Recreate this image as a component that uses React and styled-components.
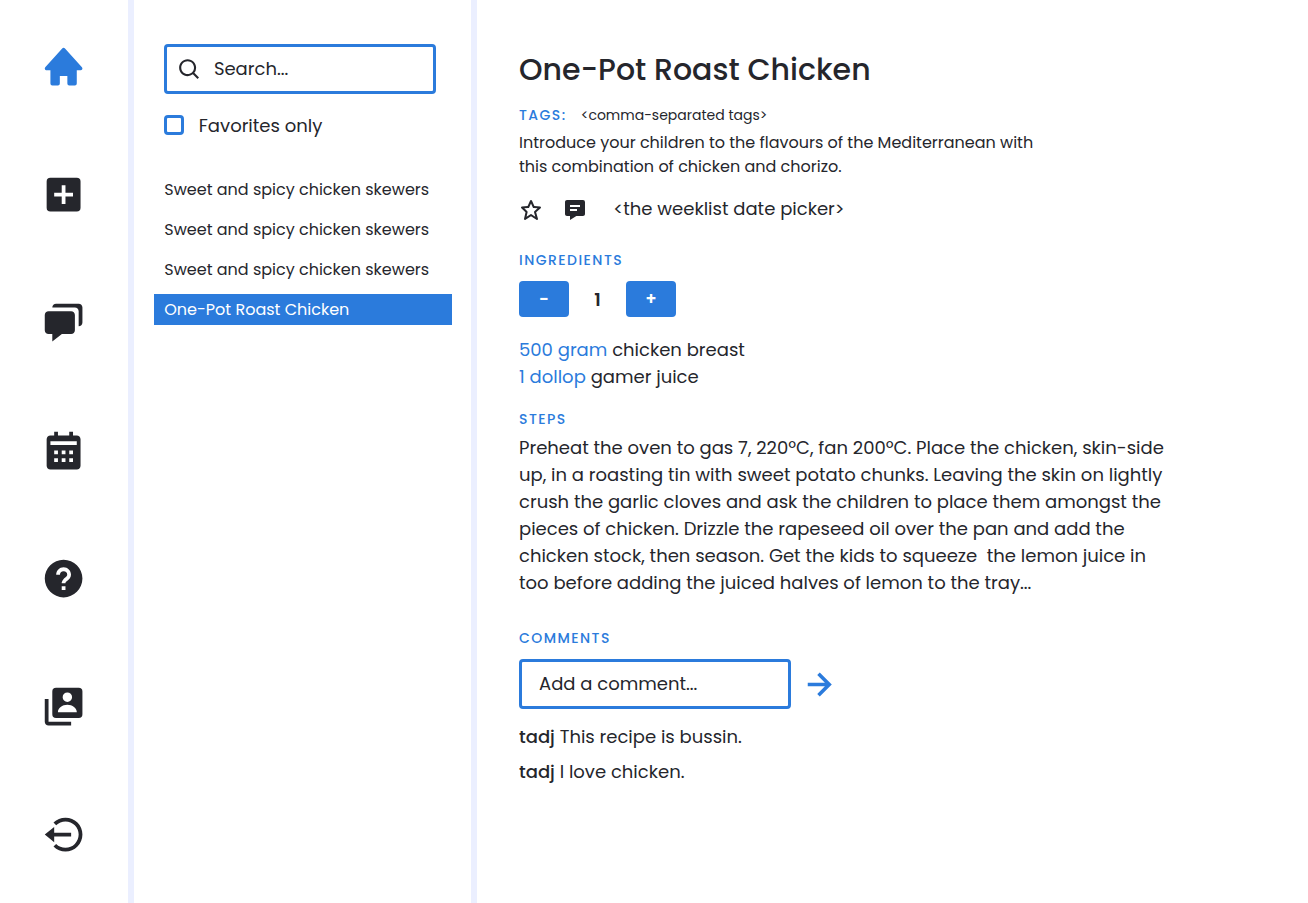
import React from "react";
import styled, { createGlobalStyle } from "styled-components";
import {
  BiSolidHome,
  BiSolidPlusSquare,
  BiSolidChat,
  BiSolidCalendar,
  BiSolidHelpCircle,
  BiSolidUserAccount,
  BiLogOutCircle,
  BiSearch,
  BiStar,
  BiSolidMessageDetail,
  BiRightArrowAlt,
} from "react-icons/bi";

const blue = "#2b7bdc";
const ink = "#25262c";
const line = "#ebefff";

const GlobalStyle = createGlobalStyle`
  *, *::before, *::after { box-sizing: border-box; }
  body {
    margin: 0;
    background: #fff;
    color: ${ink};
    font-family: Poppins, Inter, sans-serif;
    font-size: 18px;
    line-height: 27px;
  }
  svg { display: block; flex: none; }
`;

const Page = styled.div`
  display: flex;
  height: 903px;
  overflow: hidden;
`;

const Nav = styled.nav`
  width: 134px;
  flex: none;
  display: flex;
  flex-direction: column;
  align-items: center;
  gap: 82.7px;
  padding: 44.3px 0.8px 0 0;
  border-right: 6px solid ${line};
`;

const NavItem = styled.a`
  color: ${(p) => (p.$active ? blue : ink)};
`;

const Sidebar = styled.aside`
  width: 343px;
  flex: none;
  padding: 44px 19px 0 20px;
  border-right: 6px solid ${line};
`;

const Field = styled.div`
  display: flex;
  align-items: center;
  width: 272px;
  height: 50px;
  border: 3px solid ${blue};
  border-radius: 4px;
  color: ${ink};
`;

const SearchField = styled(Field)`
  margin-left: 10.3px;
  padding-left: 9.5px;
  gap: 11.6px;
`;

const SearchIcon = styled(BiSearch)`
  margin-top: 1px;
`;

const CommentField = styled(Field)`
  padding-left: 17px;
`;

const Placeholder = styled.span`
  padding-bottom: 1.6px;
`;

const Checkbox = styled.span`
  width: 20px;
  height: 20px;
  border: 3px solid ${blue};
  border-radius: 4px;
`;

const CheckRow = styled.label`
  display: flex;
  align-items: center;
  gap: 14.5px;
  margin: 18px 0 0 10.3px;
  height: 27px;
`;

const CheckMark = styled.span`
  padding-bottom: 1px;
`;

const RecipeList = styled.ul`
  list-style: none;
  margin: 35px 0 0;
  padding: 0;
  display: flex;
  flex-direction: column;
  gap: 9px;
`;

const RecipeItem = styled.li`
  width: 298px;
  height: 31px;
  padding-left: 10.3px;
  font-size: 16px;
  line-height: 31px;
  color: ${(p) => (p.$selected ? "#fff" : ink)};
  background: ${(p) => (p.$selected ? blue : "transparent")};
`;

const Main = styled.main`
  flex: 1;
  padding: 46px 0 0 42px;
`;

const Title = styled.h1`
  margin: 0;
  font-size: 30px;
  line-height: 48px;
  font-weight: 500;
`;

const Label = styled.h2`
  margin: ${(p) => p.$top || 0}px 0 0;
  font-size: 14px;
  line-height: 22px;
  font-weight: 500;
  color: ${blue};
  letter-spacing: 1.45px;
`;

const TagRow = styled.div`
  display: flex;
  margin-top: 10px;
  font-size: 14px;
  line-height: 22px;
`;

const TagText = styled.span`
  margin-left: 14px;
`;

const Lines = styled.div`
  display: flex;
  flex-direction: column;
  margin-top: ${(p) => p.$top}px;
  font-size: ${(p) => p.$size}px;
  line-height: ${(p) => p.$size * 1.5}px;
  white-space: pre;
`;

const Actions = styled.div`
  display: flex;
  align-items: center;
  height: 28px;
  margin-top: 15px;
`;

const IconButton = styled.span`
  padding-top: 4px;
  margin-right: ${(p) => p.$after}px;
`;

const Stepper = styled.div`
  display: flex;
  align-items: center;
  margin-top: 10px;
  font-weight: 600;
`;

const StepButton = styled.span`
  width: 50px;
  height: 36px;
  border-radius: 4px;
  background: ${blue};
  color: #fff;
  line-height: 37px;
  text-align: center;
  font-size: 17px;
`;

const Count = styled.span`
  width: 57px;
  text-align: center;
`;

const Ingredients = styled.div`
  margin-top: 19px;
`;

const Amount = styled.span`
  color: ${blue};
`;

const CommentForm = styled.div`
  display: flex;
  align-items: center;
  gap: 6.2px;
  margin-top: 10px;
  color: ${blue};
`;

const Comments = styled.div`
  display: flex;
  flex-direction: column;
  gap: 8px;
  margin-top: 14px;
`;

const Author = styled.strong`
  font-weight: 500;
`;

const navIcons = [
  BiSolidHome,
  BiSolidPlusSquare,
  BiSolidChat,
  BiSolidCalendar,
  BiSolidHelpCircle,
  BiSolidUserAccount,
  BiLogOutCircle,
];

const recipes = [
  "Sweet and spicy chicken skewers",
  "Sweet and spicy chicken skewers",
  "Sweet and spicy chicken skewers",
  "One-Pot Roast Chicken",
];

const intro = [
  "Introduce your children to the flavours of the Mediterranean with",
  "this combination of chicken and chorizo.",
];

const ingredients = [
  ["500 gram", "chicken breast"],
  ["1 dollop", "gamer juice"],
];

const steps = [
  "Preheat the oven to gas 7, 220ºC, fan 200ºC. Place the chicken, skin-side",
  "up, in a roasting tin with sweet potato chunks. Leaving the skin on lightly",
  "crush the garlic cloves and ask the children to place them amongst the",
  "pieces of chicken. Drizzle the rapeseed oil over the pan and add the",
  "chicken stock, then season. Get the kids to squeeze  the lemon juice in",
  "too before adding the juiced halves of lemon to the tray...",
];

const comments = [
  ["tadj", "This recipe is bussin."],
  ["tadj", "I love chicken."],
];

export default function App() {
  return (
    <Page>
      <GlobalStyle />
      <Nav>
        {navIcons.map((Icon, i) => (
          <NavItem key={i} $active={i === 0}>
            <Icon size={45.2} />
          </NavItem>
        ))}
      </Nav>
      <Sidebar>
        <SearchField>
          <SearchIcon size={25.5} />
          <Placeholder>Search...</Placeholder>
        </SearchField>
        <CheckRow>
          <CheckMark><Checkbox as="div" /></CheckMark>
          Favorites only
        </CheckRow>
        <RecipeList>
          {recipes.map((name, i) => (
            <RecipeItem key={i} $selected={i === 3}>{name}</RecipeItem>
          ))}
        </RecipeList>
      </Sidebar>
      <Main>
        <Title>One-Pot Roast Chicken</Title>
        <TagRow>
          <Label>TAGS:</Label>
          <TagText>{"<comma-separated tags>"}</TagText>
        </TagRow>
        <Lines $size={16} $top={5}>
          {intro.map((text) => <span key={text}>{text}</span>)}
        </Lines>
        <Actions>
          <IconButton $after={20}><BiStar size={24} /></IconButton>
          <IconButton $after={26.3}><BiSolidMessageDetail size={24} /></IconButton>
          {"<the weeklist date picker>"}
        </Actions>
        <Label $top={27}>INGREDIENTS</Label>
        <Stepper>
          <StepButton>-</StepButton>
          <Count>1</Count>
          <StepButton>+</StepButton>
        </Stepper>
        <Ingredients>
          {ingredients.map(([amount, name]) => (
            <div key={name}><Amount>{amount}</Amount> {name}</div>
          ))}
        </Ingredients>
        <Label $top={18}>STEPS</Label>
        <Lines $size={18} $top={4}>
          {steps.map((text) => <span key={text}>{text}</span>)}
        </Lines>
        <Label $top={31}>COMMENTS</Label>
        <CommentForm>
          <CommentField>
            <Placeholder>Add a comment...</Placeholder>
          </CommentField>
          <BiRightArrowAlt size={43} />
        </CommentForm>
        <Comments>
          {comments.map(([author, text]) => (
            <div key={text}><Author>{author}</Author> {text}</div>
          ))}
        </Comments>
      </Main>
    </Page>
  );
}
